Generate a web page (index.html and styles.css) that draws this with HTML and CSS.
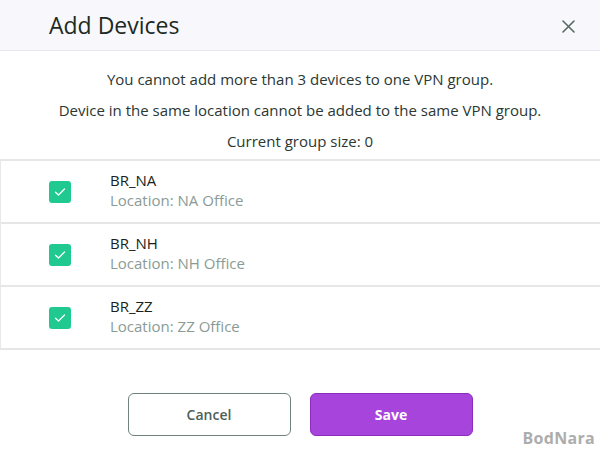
FILE: index.html
```html
<!DOCTYPE html>
<html>
<head>
    <link rel="stylesheet" href="styles.css">
</head>
<body>
<div class="dialog">
    <div class="dialog-header">
        <h2 class="dialog-title">Add Devices</h2>
        <svg class="close-btn" width="13" height="13" viewBox="0 0 13 13"><path d="M1 1 L12 12 M12 1 L1 12" stroke="#566a62" stroke-width="1.6" stroke-linecap="round"/></svg>
    </div>

    <div class="notes">
        <p>You cannot add more than 3 devices to one VPN group.</p>
        <p>Device in the same location cannot be added to the same VPN group.</p>
        <p>Current group size: 0</p>
    </div>

    <ul class="device-list">
        <li class="device-row">
            <span class="check">
                <svg width="12" height="10" viewBox="0 0 12 10"><path d="M1.5 5.2 L4.5 8 L10.5 2" fill="none" stroke="#fff" stroke-width="1.3" stroke-linecap="round" stroke-linejoin="round"/></svg>
            </span>
            <div class="device-info">
                <div class="device-name">BR_NA</div>
                <div class="device-loc">Location: NA Office</div>
            </div>
        </li>
        <li class="device-row">
            <span class="check">
                <svg width="12" height="10" viewBox="0 0 12 10"><path d="M1.5 5.2 L4.5 8 L10.5 2" fill="none" stroke="#fff" stroke-width="1.3" stroke-linecap="round" stroke-linejoin="round"/></svg>
            </span>
            <div class="device-info">
                <div class="device-name">BR_NH</div>
                <div class="device-loc">Location: NH Office</div>
            </div>
        </li>
        <li class="device-row">
            <span class="check">
                <svg width="12" height="10" viewBox="0 0 12 10"><path d="M1.5 5.2 L4.5 8 L10.5 2" fill="none" stroke="#fff" stroke-width="1.3" stroke-linecap="round" stroke-linejoin="round"/></svg>
            </span>
            <div class="device-info">
                <div class="device-name">BR_ZZ</div>
                <div class="device-loc">Location: ZZ Office</div>
            </div>
        </li>
    </ul>

    <div class="actions">
        <button class="btn btn-cancel">Cancel</button>
        <button class="btn btn-save">Save</button>
    </div>
</div>
<div class="watermark">BodNara</div>
</body>
</html>
```

FILE: styles.css
```css
body {
    margin: 0;
    padding: 0;
    background-color: #ffffff;
    font-family: "Open Sans", "Noto Sans", sans-serif;
    width: 600px;
    height: 450px;
    overflow: hidden;
    position: relative;
}

.dialog-header {
    height: 50px;
    background-color: #f8f8fc;
    border-bottom: 1px solid #e6e7ee;
    display: flex;
    align-items: center;
    justify-content: space-between;
    padding: 0 25px 0 49px;
}

.dialog-title {
    margin: 0;
    font-size: 23px;
    font-weight: normal;
    color: #1c2a23;
}

.close-btn {
    display: block;
    margin-top: 2px;
}

.notes {
    text-align: center;
    padding-top: 13px;
    padding-bottom: 2px;
}

.notes p {
    margin: 0;
    font-size: 15px;
    line-height: 31px;
    color: #2b3732;
}

.device-list {
    list-style: none;
    margin: 0;
    padding: 0;
    border-left: 1px solid #e8e8e8;
}

.device-row {
    height: 61px;
    border-top: 2px solid #e6e6e6;
    display: flex;
    align-items: center;
    padding-left: 48px;
}

.device-row:last-child {
    border-bottom: 2px solid #e6e6e6;
}

.check {
    width: 22px;
    height: 22px;
    border-radius: 3px;
    background-color: #1fc98f;
    display: flex;
    align-items: center;
    justify-content: center;
    margin-right: 39px;
}

.device-info {
    margin-top: -3px;
}

.device-name {
    font-size: 15px;
    color: #1a1f1d;
    line-height: 20px;
}

.device-loc {
    font-size: 15px;
    color: #8a9b95;
    line-height: 20px;
}

.actions {
    display: flex;
    justify-content: center;
    gap: 19px;
    padding-top: 43px;
}

.btn {
    width: 163px;
    height: 43px;
    border-radius: 6px;
    font-family: "Open Sans", "Noto Sans", sans-serif;
    font-size: 14px;
}

.btn-cancel {
    background-color: #ffffff;
    border: 1px solid #6f827b;
    color: #4d6058;
    font-weight: 600;
}

.btn-save {
    background-color: #a744dc;
    border: 1px solid #8b2dbf;
    color: #ffffff;
    font-weight: bold;
}

.watermark {
    position: absolute;
    right: 5px;
    bottom: 1px;
    font-size: 16px;
    font-weight: bold;
    color: #adadad;
    letter-spacing: 0.3px;
}
```
